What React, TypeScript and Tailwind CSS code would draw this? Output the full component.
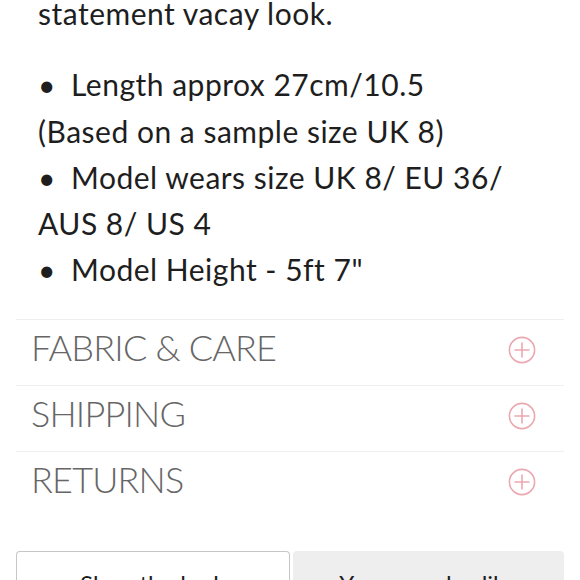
import React from 'react';

const bullets = [
  { lead: 'Length approx 27cm/10.5', rest: '(Based on a sample size UK 8)' },
  { lead: 'Model wears size UK 8/ EU 36/', rest: 'AUS 8/ US 4' },
  { lead: 'Model Height - 5ft 7"', rest: null },
];

const sections = ['FABRIC & CARE', 'SHIPPING', 'RETURNS'];

const PlusCircle: React.FC = () => (
  <svg width="28" height="28" viewBox="0 0 28 28" fill="none" stroke="#eaa8b0" strokeWidth="1.6">
    <circle cx="14" cy="14" r="12.6" />
    <path d="M14 6.5v15M6.5 14h15" />
  </svg>
);

export default function App() {
  return (
    <div className="w-[580px] h-[580px] overflow-hidden bg-white font-['Lato','Liberation_Sans',sans-serif]">
      <div className="px-[38px] text-[30px] leading-[46.3px] tracking-[0.5px] text-[#1e1e1e]">
        <p className="-mt-[10px]">statement vacay look.</p>
        <ul className="mt-[25px]">
          {bullets.map((b) => (
            <li key={b.lead} className="whitespace-nowrap">
              <span className="inline-block w-[33px]">•</span>
              {b.lead}
              {b.rest && <span className="block">{b.rest}</span>}
            </li>
          ))}
        </ul>
      </div>

      <div className="mx-4 mt-[26px]">
        {sections.map((s) => (
          <div key={s} className="flex h-[66px] items-center justify-between border-t border-[#efefef] pb-[4px] pl-[15px] pr-[28px]">
            <span className="mb-[6px] text-[36px] font-light leading-none tracking-[-0.8px] text-[#666666]">{s}</span>
            <PlusCircle />
          </div>
        ))}
      </div>

      <div className="mx-4 mt-[34px] flex gap-[3px]">
        <div className="flex h-[60px] flex-1 justify-center rounded-t-[4px] border border-b-0 border-[#c6c6c6] bg-white pt-[14px] text-[24px] text-[#1e1e1e]">
          Shop the look
        </div>
        <div className="flex h-[60px] flex-1 justify-center rounded-t-[4px] bg-[#eeeeee] pt-[15px] text-[24px] text-[#1e1e1e]">
          You may also like
        </div>
      </div>
    </div>
  );
}
